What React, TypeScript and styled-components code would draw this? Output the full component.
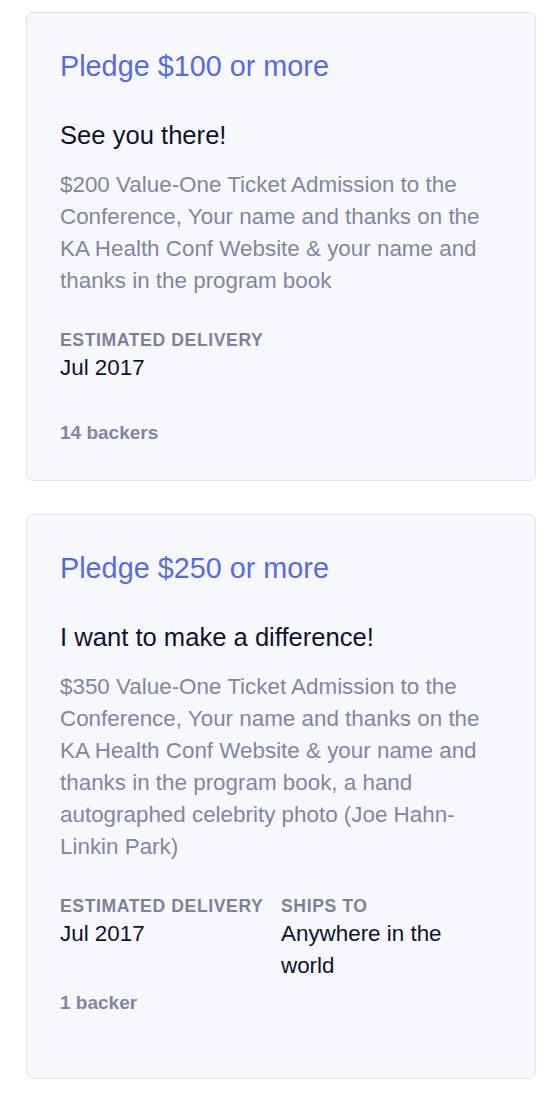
import { createGlobalStyle, styled } from 'styled-components';

const GlobalStyle = createGlobalStyle`
  html, body {
    margin: 0;
    padding: 0;
    background: #ffffff;
  }
  body {
    font-family: 'Liberation Sans', Arial, Helvetica, sans-serif;
    -webkit-font-smoothing: antialiased;
  }
`;

interface IDetail {
  label: string;
  value: string;
}

interface IReward {
  id: number;
  pledge: string;
  title: string;
  desc: string;
  details: IDetail[];
  backers: string;
  footerGap: number;
  bottomSpace: number;
}

const rewards: IReward[] = [
  {
    id: 1,
    pledge: 'Pledge $100 or more',
    title: 'See you there!',
    desc: '$200 Value-One Ticket Admission to the Conference, Your name and thanks on the KA Health Conf Website & your name and thanks in the program book',
    details: [{ label: 'Estimated delivery', value: 'Jul 2017' }],
    backers: '14 backers',
    footerGap: 37,
    bottomSpace: 35,
  },
  {
    id: 2,
    pledge: 'Pledge $250 or more',
    title: 'I want to make a difference!',
    desc: '$350 Value-One Ticket Admission to the Conference, Your name and thanks on the KA Health Conf Website & your name and thanks in the program book, a hand autographed celebrity photo (Joe Hahn-Linkin Park)',
    details: [
      { label: 'Estimated delivery', value: 'Jul 2017' },
      { label: 'Ships to', value: 'Anywhere in the world' },
    ],
    backers: '1 backer',
    footerGap: 9,
    bottomSpace: 63,
  },
];

export default function App() {
  return (
    <>
      <GlobalStyle />
      <Page>
        {rewards.map((reward) => (
          <Card key={reward.id} $bottomSpace={reward.bottomSpace}>
            <Pledge>{reward.pledge}</Pledge>
            <Title>{reward.title}</Title>
            <Desc>{reward.desc}</Desc>
            <Details>
              {reward.details.map((d) => (
                <DetailItem key={d.label}>
                  <Label>{d.label}</Label>
                  <Value>{d.value}</Value>
                </DetailItem>
              ))}
            </Details>
            <Backers $gap={reward.footerGap}>{reward.backers}</Backers>
          </Card>
        ))}
      </Page>
    </>
  );
}

const Page = styled.div`
  display: flex;
  flex-direction: column;
  gap: 33px;
  width: 510px;
  padding: 12px 22px 17px 26px;
`;

const Card = styled.div<{ $bottomSpace: number }>`
  background: #f7f8fd;
  border: 1px solid #dfe3f6;
  border-radius: 7px;
  padding: 35px 33px ${({ $bottomSpace }) => $bottomSpace}px 33px;
`;

const Pledge = styled.div`
  font-size: 28.8px;
  line-height: 36px;
  color: #566be6;
  margin-bottom: 35px;
`;

const Title = styled.div`
  font-size: 25.6px;
  line-height: 32px;
  color: #0f1131;
  margin-bottom: 18px;
`;

const Desc = styled.div`
  font-size: 22.4px;
  line-height: 32px;
  color: #8285a4;
  margin-bottom: 31px;
`;

const Details = styled.div`
  display: grid;
  grid-template-columns: 1fr 1fr;
`;

const DetailItem = styled.div`
  padding-right: 14px;
`;

const Label = styled.div`
  font-size: 17.6px;
  line-height: 24px;
  font-weight: 700;
  letter-spacing: 0.6px;
  text-transform: uppercase;
  color: #7e809e;
  white-space: nowrap;
`;

const Value = styled.div`
  font-size: 22.4px;
  line-height: 32px;
  color: #0f1131;
`;

const Backers = styled.div<{ $gap: number }>`
  margin-top: ${({ $gap }) => $gap}px;
  font-size: 19px;
  line-height: 24px;
  font-weight: 700;
  color: #8285a4;
`;
